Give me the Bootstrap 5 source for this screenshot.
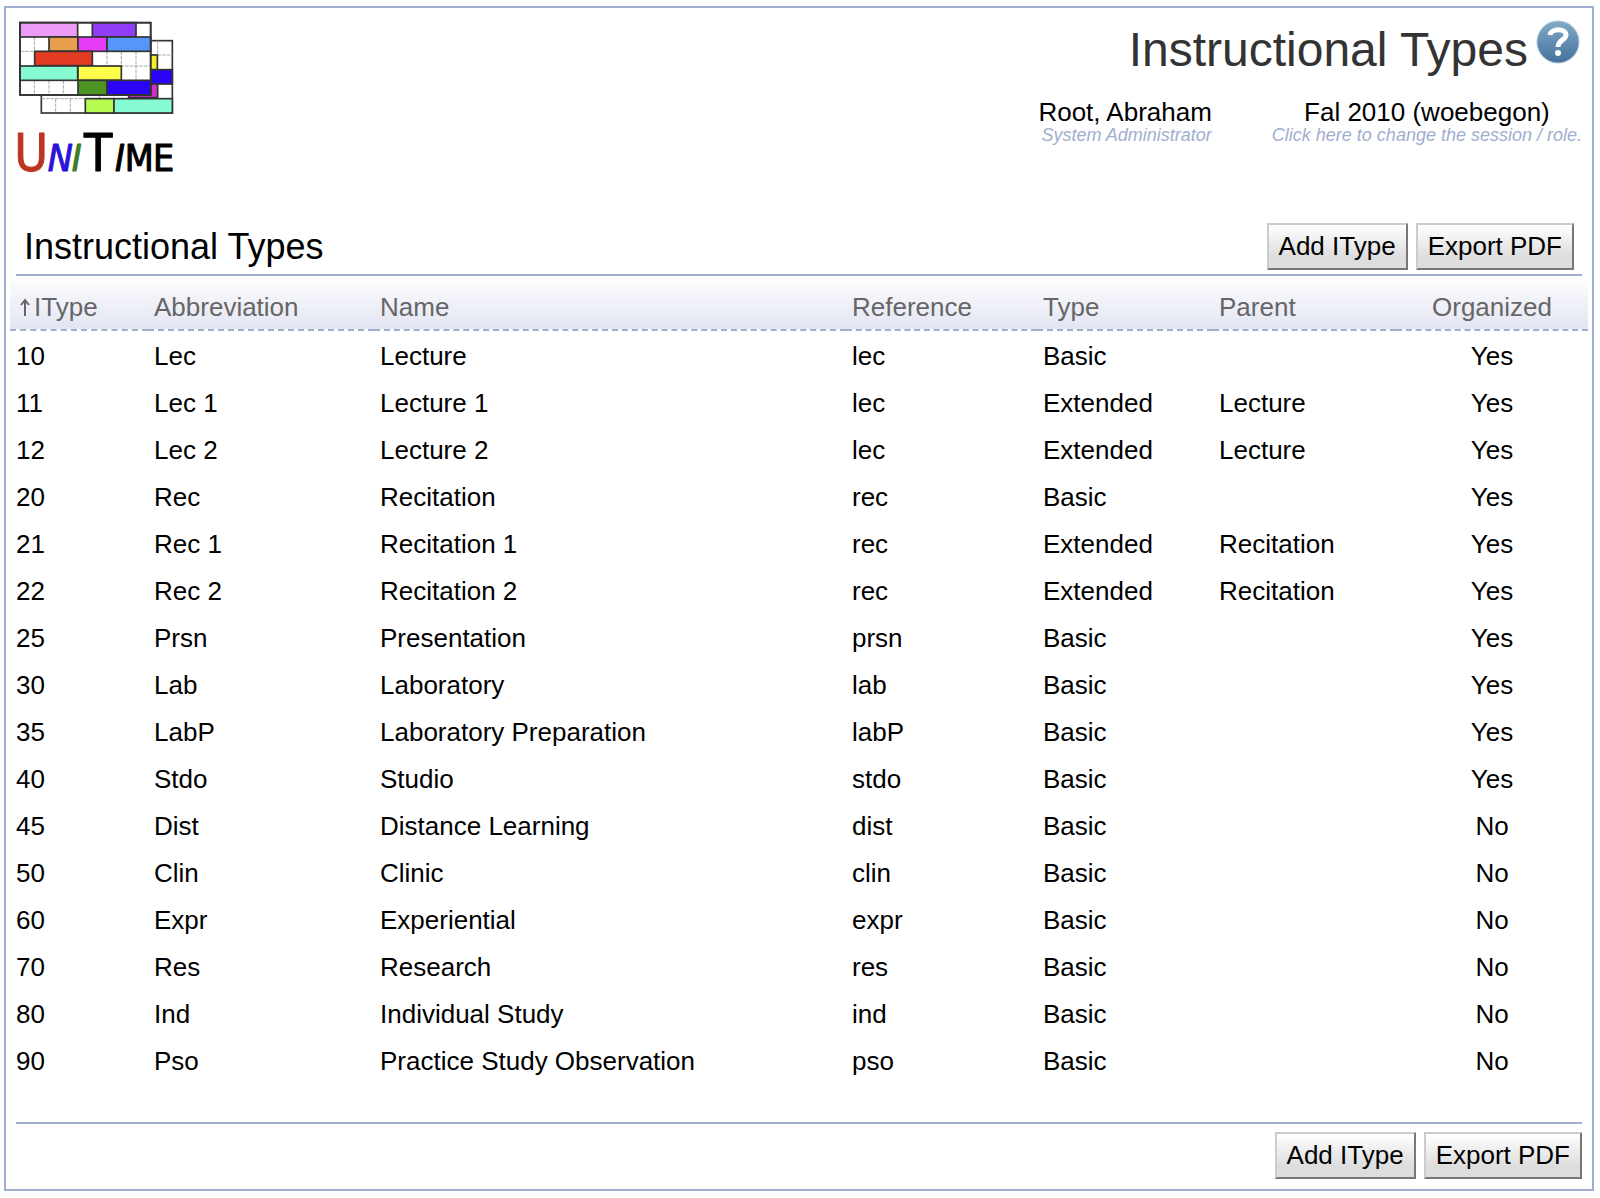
<!DOCTYPE html>
<html lang="en">
<head>
<meta charset="utf-8">
<meta name="viewport" content="width=device-width, initial-scale=1">
<title>Instructional Types</title>
<link rel="stylesheet" href="https://cdn.jsdelivr.net/npm/bootstrap@5.3.0/dist/css/bootstrap.min.css">
<style>
  :root { --line: #a0aecf; }
  body { font-family: "Liberation Sans", Arial, sans-serif; font-size: 26px; line-height: 30px; color: #000; background: #fff; }
  .page-frame { margin: 6px 6px 7px 4px; padding: 10px 4px; border: 2px solid var(--line); }
  .page-head, .section-bar, .foot-bar { margin-left: 6px; margin-right: 6px; }
  .page-head { min-height: 205px; }
  .logo { width: 160px; height: 160px; display: block; overflow: visible; }
  .logo-word { font-family: "DejaVu Sans Condensed", "DejaVu Sans", sans-serif; font-size: 112px; stroke-width: 3; stroke-linejoin: round; }
  .logo-word .cap { font-size: 154px; }
  .logo-word .lean { font-style: oblique; }
  .page-title { font-size: 48px; line-height: 56px; color: #333; margin: 4px 8px 0 0; }
  .help { margin: 2px 2px 0 0; }
  .help svg { display: block; width: 44px; height: 46px; }
  .who { margin-top: 19px; gap: 60px; }
  .who a { color: inherit; text-decoration: none; }
  .hint { font-size: 18px; line-height: 16px; font-style: italic; color: var(--line); }
  .section-bar { border-bottom: 2px solid var(--line); padding: 0 8px 4px; }
  .section-bar h2 { font-size: 36px; line-height: 42px; margin: 0; font-weight: 400; }
  .foot-bar { border-top: 2px solid var(--line); margin-top: 39px; padding-top: 8px; }
  .tool { font: inherit; color: #000; padding: 6px 10px 7px; border: 2px solid; border-color: #ccc #777 #777 #ccc; background: linear-gradient(#fff, #ddd 75%); }
  .types { width: 100%; table-layout: fixed; border-collapse: separate; border-spacing: 0; }
  .types th { font-weight: 400; color: #666; padding: 16px 6px 7px; border-bottom: 2px dashed var(--line); background: linear-gradient(#fff, #e2e4f2); white-space: nowrap; }
  .types th:first-child { padding-left: 9px; }
  .types td { padding: 10px 6px 7px; }
  .types th:last-child, .types td:last-child { text-align: center; }
  .c-itype { width: 138px; } .c-abbv { width: 226px; } .c-ref { width: 191px; }
  .c-type { width: 176px; } .c-parent { width: 183px; } .c-org { width: 192px; }
  .arrow { width: 12px; height: 18px; vertical-align: 0; margin-right: 3px; }
</style>
<script src="https://cdn.jsdelivr.net/npm/bootstrap@5.3.0/dist/js/bootstrap.bundle.min.js"></script>
</head>
<body>
<div class="page-frame">
  <header class="page-head d-flex justify-content-between align-items-start">
    <svg class="logo" viewBox="48 54 480 480" role="img" aria-label="UniTime">
      <g stroke="#333" stroke-width="5">
        <rect x="124" y="122" width="393" height="217" fill="#fff"/>
        <path d="M167 296v43M211 296v43M298 285v11M473 122v174M124 296h393M430 165h87M430 252h87" stroke="#aaa" stroke-width="3" stroke-dasharray="11 3" fill="none"/>
        <rect x="430" y="165" width="42" height="44" fill="#f4ee28"/>
        <rect x="430" y="209" width="87" height="43" fill="#2a05f5"/>
        <rect x="386" y="252" width="87" height="41" fill="#cf2fc8"/>
        <rect x="256" y="296" width="86" height="43" fill="#b6fc50"/>
        <rect x="342" y="296" width="175" height="43" fill="#86fad0"/>
        <rect x="60" y="68" width="392" height="217" fill="#fff"/>
        <path d="M103 111v43M103 241v44M147 241v44M190 241v44M321 154v44M364 154v44M408 154v87M60 154h87M277 198h175" stroke="#aaa" stroke-width="3" stroke-dasharray="11 3" fill="none"/>
        <rect x="60" y="68" width="173" height="43" fill="#ee9bf7"/>
        <rect x="277" y="68" width="131" height="43" fill="#8f3df7"/>
        <rect x="147" y="111" width="87" height="43" fill="#e99e4b"/>
        <rect x="234" y="111" width="87" height="43" fill="#e63bf7"/>
        <rect x="321" y="111" width="131" height="43" fill="#5596f8"/>
        <rect x="104" y="154" width="173" height="43" fill="#e23b22"/>
        <rect x="60" y="198" width="173" height="43" fill="#86fad0"/>
        <rect x="234" y="198" width="130" height="43" fill="#fdfd4b"/>
        <rect x="234" y="241" width="87" height="44" fill="#4c9421"/>
        <rect x="321" y="241" width="131" height="44" fill="#2a05f5"/>
        <rect x="60" y="68" width="392" height="217" fill="none"/>
      </g>
      <text class="logo-word" y="513"><tspan class="cap" x="43" fill="#bd3520" stroke="#bd3520">U</tspan><tspan class="lean" x="143" fill="#2a12d8" stroke="#2a12d8">N</tspan><tspan class="lean" x="215" fill="#3f7d22" stroke="#3f7d22">I</tspan><tspan class="cap" x="252" fill="#000" stroke="#000">T</tspan><tspan class="lean" x="345" fill="#000" stroke="#000">I</tspan><tspan x="374" fill="#000" stroke="#000">M</tspan><tspan x="459" fill="#000" stroke="#000">E</tspan></text>
    </svg>
    <div class="d-flex flex-column align-items-end">
      <div class="d-flex align-items-start">
        <h1 class="page-title fw-normal">Instructional Types</h1>
        <a class="help" href="#" aria-label="Help">
          <svg viewBox="0 0 44 46" aria-hidden="true">
            <defs><linearGradient id="ball" x2="0" y2="1"><stop offset="0" stop-color="#82abc8"/><stop offset="1" stop-color="#44709c"/></linearGradient></defs>
            <circle cx="22" cy="22" r="21" fill="url(#ball)" stroke="#a9c3d8"/>
            <path d="M14 15C15 8 30 8 30 15C30 20 22 20 22 27" fill="none" stroke="#fff" stroke-width="5"/>
            <circle cx="22" cy="33" r="3" fill="#fff"/>
          </svg>
        </a>
      </div>
      <div class="who d-flex">
        <div class="text-end"><div>Root, Abraham</div><div class="hint">System Administrator</div></div>
        <a class="text-center" href="#"><div>Fal 2010 (woebegon)</div><div class="hint">Click here to change the session / role.</div></a>
      </div>
    </div>
  </header>

  <main>
    <div class="section-bar d-flex justify-content-between align-items-center">
      <h2>Instructional Types</h2>
      <div class="d-flex gap-2"><button type="button" class="tool">Add IType</button><button type="button" class="tool">Export PDF</button></div>
    </div>
    <table class="types">
      <colgroup><col class="c-itype"><col class="c-abbv"><col><col class="c-ref"><col class="c-type"><col class="c-parent"><col class="c-org"></colgroup>
      <thead>
        <tr><th scope="col" aria-sort="ascending"><svg class="arrow" viewBox="0 0 12 18" aria-hidden="true"><path d="M6 18V3M2 7L6 2L10 7" fill="none" stroke="#666" stroke-width="2"/></svg>IType</th><th scope="col">Abbreviation</th><th scope="col">Name</th><th scope="col">Reference</th><th scope="col">Type</th><th scope="col">Parent</th><th scope="col">Organized</th></tr>
      </thead>
      <tbody>
        <tr><td>10</td><td>Lec</td><td>Lecture</td><td>lec</td><td>Basic</td><td></td><td>Yes</td></tr>
        <tr><td>11</td><td>Lec 1</td><td>Lecture 1</td><td>lec</td><td>Extended</td><td>Lecture</td><td>Yes</td></tr>
        <tr><td>12</td><td>Lec 2</td><td>Lecture 2</td><td>lec</td><td>Extended</td><td>Lecture</td><td>Yes</td></tr>
        <tr><td>20</td><td>Rec</td><td>Recitation</td><td>rec</td><td>Basic</td><td></td><td>Yes</td></tr>
        <tr><td>21</td><td>Rec 1</td><td>Recitation 1</td><td>rec</td><td>Extended</td><td>Recitation</td><td>Yes</td></tr>
        <tr><td>22</td><td>Rec 2</td><td>Recitation 2</td><td>rec</td><td>Extended</td><td>Recitation</td><td>Yes</td></tr>
        <tr><td>25</td><td>Prsn</td><td>Presentation</td><td>prsn</td><td>Basic</td><td></td><td>Yes</td></tr>
        <tr><td>30</td><td>Lab</td><td>Laboratory</td><td>lab</td><td>Basic</td><td></td><td>Yes</td></tr>
        <tr><td>35</td><td>LabP</td><td>Laboratory Preparation</td><td>labP</td><td>Basic</td><td></td><td>Yes</td></tr>
        <tr><td>40</td><td>Stdo</td><td>Studio</td><td>stdo</td><td>Basic</td><td></td><td>Yes</td></tr>
        <tr><td>45</td><td>Dist</td><td>Distance Learning</td><td>dist</td><td>Basic</td><td></td><td>No</td></tr>
        <tr><td>50</td><td>Clin</td><td>Clinic</td><td>clin</td><td>Basic</td><td></td><td>No</td></tr>
        <tr><td>60</td><td>Expr</td><td>Experiential</td><td>expr</td><td>Basic</td><td></td><td>No</td></tr>
        <tr><td>70</td><td>Res</td><td>Research</td><td>res</td><td>Basic</td><td></td><td>No</td></tr>
        <tr><td>80</td><td>Ind</td><td>Individual Study</td><td>ind</td><td>Basic</td><td></td><td>No</td></tr>
        <tr><td>90</td><td>Pso</td><td>Practice Study Observation</td><td>pso</td><td>Basic</td><td></td><td>No</td></tr>
      </tbody>
    </table>
    <div class="foot-bar d-flex justify-content-end gap-2"><button type="button" class="tool">Add IType</button><button type="button" class="tool">Export PDF</button></div>
  </main>
</div>
</body>
</html>
